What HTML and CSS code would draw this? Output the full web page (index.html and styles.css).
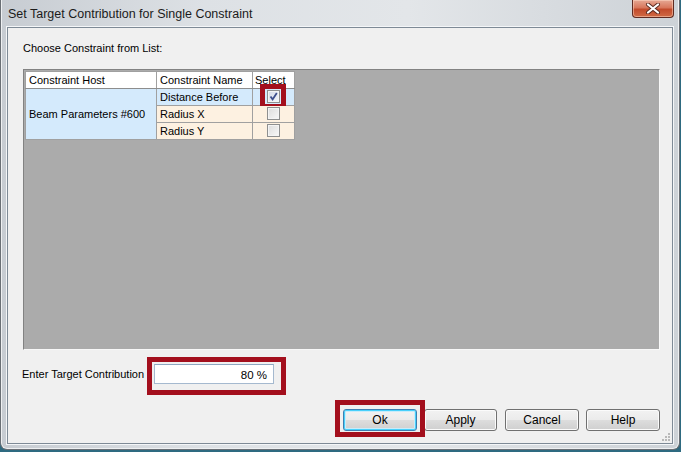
FILE: index.html
```html
<!DOCTYPE html>
<html>
<head>
<meta charset="utf-8">
<link rel="stylesheet" href="styles.css">
</head>
<body>
<div class="window">
  <div class="titlebar">
    <span class="title">Set Target Contribution for Single Constraint</span>
    <div class="close">
      <svg width="18" height="11" viewBox="0 0 18 11"><path d="M4 1.5 L14 9.5 M14 1.5 L4 9.5" stroke="#5a2a20" stroke-width="4" stroke-linecap="round"/><path d="M4 1.5 L14 9.5 M14 1.5 L4 9.5" stroke="#fff" stroke-width="2.2" stroke-linecap="round"/></svg>
    </div>
  </div>
  <div class="client">
    <div class="prompt">Choose Constraint from List:</div>
    <div class="gridarea">
      <table class="grid">
        <tr class="head">
          <td class="c1">Constraint Host</td>
          <td class="c2">Constraint Name</td>
          <td class="c3">Select</td>
        </tr>
        <tr class="sel">
          <td class="host" rowspan="3">Beam Parameters #600</td>
          <td>Distance Before</td>
          <td class="chk"><span class="cb checked"><svg width="11" height="11" viewBox="0 0 11 11"><path d="M2.5 5.5 L4.6 8.4 L8.8 2" fill="none" stroke="#3e4f8c" stroke-width="1.8"/></svg></span><span class="mark mark-cb"></span></td>
        </tr>
        <tr class="row">
          <td>Radius X</td>
          <td class="chk"><span class="cb"></span></td>
        </tr>
        <tr class="row">
          <td>Radius Y</td>
          <td class="chk"><span class="cb"></span></td>
        </tr>
      </table>
    </div>
    <div class="entry">
      <span class="elabel">Enter Target Contribution</span>
      <div class="boxwrap">
        <div class="textbox">80 %</div>
        <span class="mark mark-box"></span>
      </div>
    </div>
    <div class="buttons">
      <div class="btnwrap">
        <div class="btn ok">Ok</div>
        <span class="mark mark-ok"></span>
      </div>
      <div class="btn apply">Apply</div>
      <div class="btn cancel">Cancel</div>
      <div class="btn help">Help</div>
    </div>
    <div class="grip">
      <svg width="9" height="9" viewBox="0 0 9 9" fill="#b8b8b8"><rect x="7" y="1" width="2" height="2"/><rect x="4" y="4" width="2" height="2"/><rect x="7" y="4" width="2" height="2"/><rect x="1" y="7" width="2" height="2"/><rect x="4" y="7" width="2" height="2"/><rect x="7" y="7" width="2" height="2"/></svg>
    </div>
  </div>
</div>
</body>
</html>
```
FILE: styles.css
```css
html, body {
  margin: 0;
  padding: 0;
}
body {
  width: 681px;
  height: 452px;
  background: #2e6a80;
  font-family: "Liberation Sans", Arial, sans-serif;
  font-size: 11px;
  color: #000;
  overflow: hidden;
}
.window {
  box-sizing: border-box;
  width: 680px;
  height: 450px;
  border: 1px solid #6a6f75;
  border-top: none;
  border-radius: 0 0 7px 7px;
  background: linear-gradient(to right, #c7ccd2 0%, #dde1e5 30%, #e3e6e9 60%, #cdd2d7 100%);
  display: flex;
  flex-direction: column;
  box-shadow: inset 1px 0 0 #eef0f2, inset -1px 0 0 #eef0f2, inset 0 -1px 0 #eef0f2;
}
.titlebar {
  height: 27px;
  display: flex;
  align-items: flex-start;
  justify-content: space-between;
}
.title {
  font-size: 12.5px;
  color: #1b1b1b;
  margin: 7px 0 0 7px;
}
.close {
  box-sizing: border-box;
  width: 42px;
  height: 18px;
  margin-right: 5px;
  border: 1px solid #5f2b22;
  border-top: none;
  border-radius: 0 0 4px 4px;
  background: linear-gradient(#e6a894 0%, #d8775c 45%, #c24b2c 55%, #d06a45 100%);
  display: flex;
  align-items: center;
  justify-content: center;
  box-shadow: inset 0 0 0 1px rgba(255,220,200,0.5);
}
.client {
  box-sizing: border-box;
  margin: 0 6px 0 6px;
  height: 417px;
  border: 1px solid #7e8a96;
  background: #f0f0f0;
  box-shadow: 0 0 0 1px #f4f6f8;
  position: relative;
  display: flex;
  flex-direction: column;
  padding: 0 12px 0 15px;
}
.prompt {
  margin-top: 14px;
  height: 13px;
  line-height: 13px;
}
.gridarea {
  box-sizing: border-box;
  margin-top: 14px;
  width: 637px;
  height: 281px;
  background: #ababab;
  border: 1px solid #828282;
  border-right-color: #f8f8f8;
  border-bottom-color: #f8f8f8;
  padding: 1px;
}
.grid {
  border-collapse: collapse;
  border: 1px solid #696969;
  font-size: 11px;
}
.grid td {
  border: 1px solid #a0a0a0;
  height: 16px;
  padding: 0 0 0 3px;
  line-height: 15px;
  white-space: nowrap;
}
.grid .head td {
  background: #ffffff;
  border-bottom-color: #8d8d8d;
}
.c1 { width: 127px; }
.c2 { width: 92px; }
.c3 { width: 39px; }
.grid td.c3 { padding-left: 2px; }
.host {
  background: #d4eafc;
  padding-left: 4px;
}
.sel td {
  background: #d4eafc;
}
.row td {
  background: #fdf1e1;
}
.grid td.chk {
  padding: 0;
  text-align: center;
  position: relative;
}
.cb {
  box-sizing: border-box;
  display: inline-block;
  width: 13px;
  height: 13px;
  vertical-align: middle;
  border: 1px solid #8e8f8f;
  background: linear-gradient(135deg, #dcdcdc, #f8f8f8);
  box-shadow: inset 0 0 0 1px #f4f4f4;
  margin-top: -2px;
}
.cb.checked {
  background: linear-gradient(135deg, #d4d9e6, #f4f6fb);
  display: inline-flex;
  align-items: center;
  justify-content: center;
}
.cb svg { display: block; }
.mark {
  position: absolute;
  box-sizing: border-box;
  border: 5px solid #a30f1d;
  pointer-events: none;
}
.mark-cb {
  left: 7px;
  top: -5px;
  width: 26px;
  height: 25px;
}
.entry {
  margin-top: 14px;
  display: flex;
  align-items: center;
  height: 20px;
}
.elabel {
  margin-left: -1px;
  width: 132px;
  white-space: nowrap;
  overflow: hidden;
}
.boxwrap {
  position: relative;
}
.textbox {
  box-sizing: border-box;
  width: 120px;
  height: 20px;
  border: 1px solid #a5b9cf;
  border-top-color: #8ea6c0;
  background: #fff;
  text-align: right;
  padding: 3px 6px 0 0;
  font-size: 11.5px;
  line-height: 14px;
}
.mark-box {
  left: -7px;
  top: -7px;
  width: 139px;
  height: 38px;
  border-width: 5px;
}
.buttons {
  margin-top: 25px;
  display: flex;
  justify-content: flex-end;
}
.btnwrap {
  position: relative;
}
.btn {
  box-sizing: border-box;
  height: 22px;
  border: 1px solid #707070;
  border-radius: 3px;
  background: linear-gradient(#f2f2f2 0%, #ebebeb 48%, #dddddd 52%, #cfcfcf 100%);
  box-shadow: inset 0 0 0 1px #fbfbfb;
  display: flex;
  align-items: center;
  justify-content: center;
  font-size: 12px;
}
.btn.ok {
  width: 74px;
  border-color: #3c7fb1;
  box-shadow: inset 0 0 0 1px #48d0fb, inset 0 0 0 2px #c8ecfa;
}
.btn.apply { width: 73px; margin-left: 7px; }
.btn.cancel { width: 74px; margin-left: 8px; }
.btn.help { width: 74px; margin-left: 7px; }
.mark-ok {
  left: -8px;
  top: -9px;
  width: 90px;
  height: 37px;
  border-width: 5px;
}
.grip {
  position: absolute;
  right: 2px;
  bottom: 2px;
  width: 9px;
  height: 9px;
}
.grip svg { display: block; }
```
